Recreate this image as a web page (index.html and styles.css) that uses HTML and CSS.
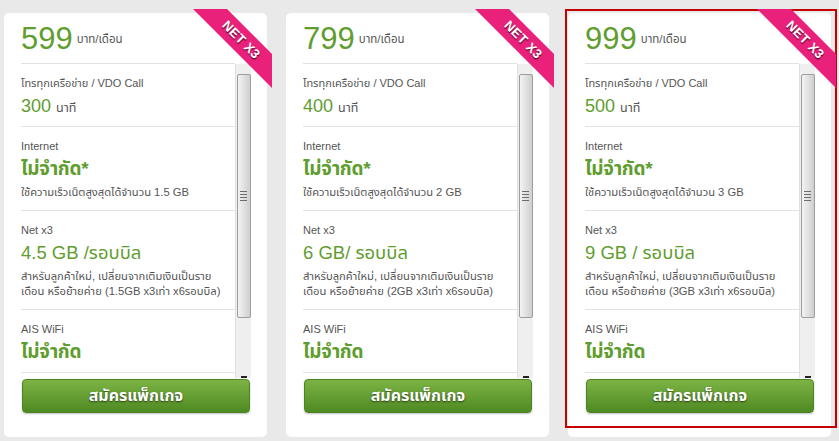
FILE: index.html
```html
<!DOCTYPE html>
<html lang="th">
<head>
<meta charset="utf-8">
<title>แพ็กเกจ NET X3</title>
<link rel="stylesheet" href="styles.css">
</head>
<body>
<div class="page">
  <div class="card">
    <div class="ribbon"><span>NET X3</span></div>
    <div class="head"><span class="price">599</span><span class="unit">บาท/เดือน</span></div>
    <div class="body">
      <div class="list">
        <div class="sec"><div class="lbl">โทรทุกเครือข่าย / VDO Call</div><div class="val"><span class="num">300</span><span class="sub">นาที</span></div></div>
        <div class="sec"><div class="lbl">Internet</div><div class="val big">ไม่จำกัด*</div><div class="desc"><span>ใช้ความเร็วเน็ตสูงสุดได้จำนวน 1.5 GB</span></div></div>
        <div class="sec"><div class="lbl">Net x3</div><div class="val">4.5 GB /รอบบิล</div><div class="desc"><span>สำหรับลูกค้าใหม่, เปลี่ยนจากเติมเงินเป็นราย</span><span>เดือน หรือย้ายค่าย (1.5GB x3เท่า x6รอบบิล)</span></div></div>
        <div class="sec"><div class="lbl">AIS WiFi</div><div class="val big">ไม่จำกัด</div></div>
      </div>
      <div class="sbar"><div class="thumb"><i></i><i></i><i></i><i></i></div><div class="arrow"></div></div>
    </div>
    <button class="btn">สมัครแพ็กเกจ</button>
  </div>

  <div class="card">
    <div class="ribbon"><span>NET X3</span></div>
    <div class="head"><span class="price">799</span><span class="unit">บาท/เดือน</span></div>
    <div class="body">
      <div class="list">
        <div class="sec"><div class="lbl">โทรทุกเครือข่าย / VDO Call</div><div class="val"><span class="num">400</span><span class="sub">นาที</span></div></div>
        <div class="sec"><div class="lbl">Internet</div><div class="val big">ไม่จำกัด*</div><div class="desc"><span>ใช้ความเร็วเน็ตสูงสุดได้จำนวน 2 GB</span></div></div>
        <div class="sec"><div class="lbl">Net x3</div><div class="val">6 GB/ รอบบิล</div><div class="desc"><span>สำหรับลูกค้าใหม่, เปลี่ยนจากเติมเงินเป็นราย</span><span>เดือน หรือย้ายค่าย (2GB x3เท่า x6รอบบิล)</span></div></div>
        <div class="sec"><div class="lbl">AIS WiFi</div><div class="val big">ไม่จำกัด</div></div>
      </div>
      <div class="sbar"><div class="thumb"><i></i><i></i><i></i><i></i></div><div class="arrow"></div></div>
    </div>
    <button class="btn">สมัครแพ็กเกจ</button>
  </div>

  <div class="card selected">
    <div class="ribbon"><span>NET X3</span></div>
    <div class="head"><span class="price">999</span><span class="unit">บาท/เดือน</span></div>
    <div class="body">
      <div class="list">
        <div class="sec"><div class="lbl">โทรทุกเครือข่าย / VDO Call</div><div class="val"><span class="num">500</span><span class="sub">นาที</span></div></div>
        <div class="sec"><div class="lbl">Internet</div><div class="val big">ไม่จำกัด*</div><div class="desc"><span>ใช้ความเร็วเน็ตสูงสุดได้จำนวน 3 GB</span></div></div>
        <div class="sec"><div class="lbl">Net x3</div><div class="val">9 GB / รอบบิล</div><div class="desc"><span>สำหรับลูกค้าใหม่, เปลี่ยนจากเติมเงินเป็นราย</span><span>เดือน หรือย้ายค่าย (3GB x3เท่า x6รอบบิล)</span></div></div>
        <div class="sec"><div class="lbl">AIS WiFi</div><div class="val big">ไม่จำกัด</div></div>
      </div>
      <div class="sbar"><div class="thumb"><i></i><i></i><i></i><i></i></div><div class="arrow"></div></div>
    </div>
    <button class="btn">สมัครแพ็กเกจ</button>
  </div>
</div>
</body>
</html>
```

FILE: styles.css
```css
html, body {
  margin: 0;
  padding: 0;
  background: #e9e9e9;
}
body {
  font-family: "Liberation Sans", "Noto Sans Thai", "Noto Sans", sans-serif;
  color: #555;
}
.page {
  display: flex;
  gap: 19px;
  padding: 13px 0 0 4px;
}
.card {
  position: relative;
  width: 263px;
  box-sizing: border-box;
  background: #fff;
  border-radius: 5px;
  padding: 0 16px 24px 17px;
}
.selected::after {
  content: "";
  position: absolute;
  left: -3px;
  top: -4px;
  width: 272px;
  height: 419px;
  box-sizing: border-box;
  border: 2px solid #c40000;
  pointer-events: none;
}
.ribbon {
  position: absolute;
  top: -4px;
  right: -5px;
  width: 79px;
  height: 79px;
  overflow: hidden;
  z-index: 2;
}
.ribbon span {
  position: absolute;
  left: -32px;
  top: 19px;
  width: 160px;
  height: 24px;
  line-height: 24px;
  background: #ea217b;
  color: #fff;
  font-weight: bold;
  font-size: 13px;
  text-align: center;
  letter-spacing: 0.3px;
  text-shadow: 1px 1px 1px rgba(0,0,0,0.6);
  transform: rotate(45deg);
}
.head {
  display: flex;
  align-items: center;
  height: 49px;
  padding-top: 1px;
  margin-right: 16px;
  border-bottom: 1px solid #e2e2e2;
}
.price {
  font-size: 31px;
  line-height: 46px;
  color: #5f9d2f;
}
.unit {
  font-size: 11.5px;
  margin-left: 4px;
  margin-top: 2px;
  color: #555;
}
.body {
  display: flex;
  height: 314px;
}
.list {
  flex: 1;
  overflow: hidden;
}
.sec {
  padding: 10px 0 6px;
  border-bottom: 1px solid #e2e2e2;
}
.lbl {
  height: 18px;
  font-size: 11px;
  line-height: 18px;
  color: #555;
}
.val {
  display: flex;
  align-items: baseline;
  height: 28px;
  font-size: 18.5px;
  line-height: 28px;
  color: #5f9d2f;
}
.val.big {
  font-size: 19px;
  font-weight: bold;
  letter-spacing: -0.3px;
}
.num {
  font-size: 18px;
}
.sub {
  font-size: 12.5px;
  color: #555;
  margin-left: 5px;
}
.desc {
  margin: 2px 0 4px;
  color: #555;
}
.desc span {
  display: block;
  height: 15px;
  font-size: 11.2px;
  line-height: 15px;
  white-space: nowrap;
}
.sbar {
  width: 15px;
  background: #efefef;
  border-left: 1px solid #e0e0e0;
  display: flex;
  flex-direction: column;
  align-items: center;
  overflow: hidden;
}
.thumb {
  margin-top: 10px;
  width: 12px;
  height: 242px;
  border: 1px solid #9d9d9d;
  border-radius: 2px;
  background: linear-gradient(to right, #f3f3f3, #dedede 60%, #cfcfcf);
  display: flex;
  flex-direction: column;
  justify-content: center;
  align-items: center;
  gap: 2px;
}
.thumb i {
  display: block;
  width: 7px;
  height: 1px;
  background: #6c6c6c;
}
.arrow {
  margin-top: auto;
  width: 6px;
  height: 2px;
  background: #222;
}
.btn {
  display: block;
  width: calc(100% - 2px);
  height: 34px;
  margin: 1px 1px 0;
  border: 1px solid #4b8420;
  border-radius: 4px;
  background: linear-gradient(#7db345, #4e8a22);
  color: #fff;
  font-family: inherit;
  font-size: 16px;
  font-weight: bold;
  text-shadow: 0 1px 2px rgba(0,0,0,0.6);
  box-shadow: 0 1px 2px rgba(0,0,0,0.25);
  cursor: pointer;
}
```
